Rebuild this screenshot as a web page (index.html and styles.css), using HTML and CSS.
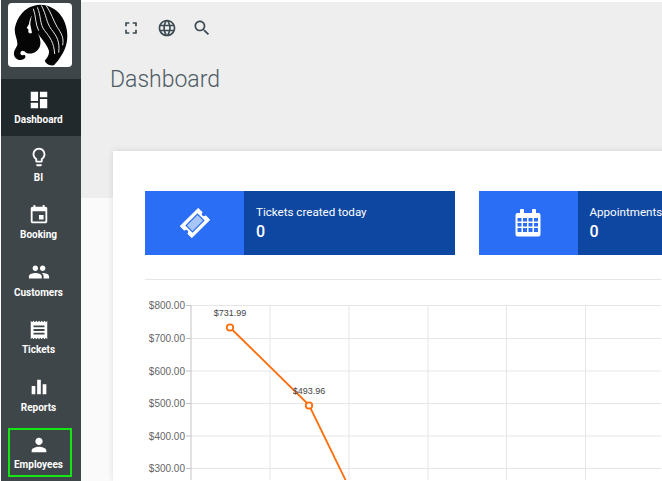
FILE: index.html
```
<!DOCTYPE html>
<html lang="en">
<head>
<meta charset="utf-8">
<title>Dashboard</title>
<link rel="stylesheet" href="styles.css">
</head>
<body>
<div class="app">
  <aside class="sidebar">
    <div class="logo-wrap">
      <div class="logo">
        <svg viewBox="12 9 192 192" width="64" height="64">
          <path class="hair" d="M88 18C62 24 40 50 33 82C29 102 42 120 40 134C38 144 28 150 30 164C32 176 46 184 58 178C66 174 66 166 60 164C54 168 47 164 50 156C54 150 60 152 66 158C82 166 102 156 108 138C112 124 106 110 102 100C112 118 128 132 134 150C138 162 130 172 122 182C128 194 140 198 150 196C166 178 182 156 188 128C194 96 186 62 164 38C146 20 116 8 88 18Z"/>
          <path class="skin" d="M84 46C78 56 76 64 75 72L68 84L73 88L73 97C76 101 80 101 84 98C83 90 80 82 79 74C79 64 81 56 84 46Z"/>
          <path class="strand" d="M100 22C112 48 106 72 122 92C138 112 150 128 152 162M112 16C128 46 126 66 142 88C158 108 168 124 164 158M126 16C142 38 148 62 160 82C172 100 180 112 176 136M88 26C96 48 94 74 104 92"/>
        </svg>
      </div>
    </div>
    <nav class="nav">
      <a class="nav-item active">
        <svg class="nav-icon" viewBox="0 0 24 24"><path d="M3 13h8V3H3v10zm0 8h8v-6H3v6zm10 0h8V11h-8v10zm0-18v6h8V3h-8z"/></svg>
        <span>Dashboard</span>
      </a>
      <a class="nav-item">
        <svg class="nav-icon" viewBox="0 0 24 24"><path d="M9 21c0 .55.45 1 1 1h4c.55 0 1-.45 1-1v-1H9v1zm3-19C8.14 2 5 5.14 5 9c0 2.38 1.19 4.47 3 5.74V17c0 .55.45 1 1 1h6c.55 0 1-.45 1-1v-2.26c1.81-1.27 3-3.36 3-5.74 0-3.86-3.14-7-7-7zm2.85 11.1l-.85.6V16h-4v-2.3l-.85-.6C7.8 12.16 7 10.63 7 9c0-2.76 2.24-5 5-5s5 2.24 5 5c0 1.63-.8 3.16-2.15 4.1z"/></svg>
        <span>BI</span>
      </a>
      <a class="nav-item">
        <svg class="nav-icon" viewBox="0 0 24 24"><path d="M17 12h-5v5h5v-5zM16 1v2H8V1H6v2H5c-1.11 0-1.99.9-1.99 2L3 19c0 1.1.89 2 2 2h14c1.1 0 2-.9 2-2V5c0-1.1-.9-2-2-2h-1V1h-2zm3 18H5V8h14v11z"/></svg>
        <span>Booking</span>
      </a>
      <a class="nav-item">
        <svg class="nav-icon" viewBox="0 0 24 24"><path d="M16 11c1.66 0 2.99-1.34 2.99-3S17.66 5 16 5c-1.66 0-3 1.34-3 3s1.34 3 3 3zm-8 0c1.66 0 2.99-1.34 2.99-3S9.66 5 8 5C6.34 5 5 6.34 5 8s1.34 3 3 3zm0 2c-2.33 0-7 1.17-7 3.5V19h14v-2.5c0-2.33-4.67-3.5-7-3.5zm8 0c-.29 0-.62.02-.97.05 1.16.84 1.97 1.97 1.97 3.45V19h6v-2.5c0-2.33-4.67-3.5-7-3.5z"/></svg>
        <span>Customers</span>
      </a>
      <a class="nav-item">
        <svg class="nav-icon" viewBox="0 0 24 24"><path d="M18 17H6v-2h12v2zm0-4H6v-2h12v2zm0-4H6V7h12v2zM3 22l1.5-1.5L6 22l1.5-1.5L9 22l1.5-1.5L12 22l1.5-1.5L15 22l1.5-1.5L18 22l1.5-1.5L21 22V2l-1.5 1.5L18 2l-1.5 1.5L15 2l-1.5 1.5L12 2l-1.5 1.5L9 2 7.5 3.5 6 2 4.5 3.5 3 2v20z"/></svg>
        <span>Tickets</span>
      </a>
      <a class="nav-item">
        <svg class="nav-icon" viewBox="0 0 24 24"><path d="M4 11h4v9H4zM10 4h4v16h-4zM16 9h4v11h-4z"/></svg>
        <span>Reports</span>
      </a>
      <a class="nav-item highlighted">
        <svg class="nav-icon" viewBox="0 0 24 24"><path d="M12 12c2.21 0 4-1.79 4-4s-1.79-4-4-4-4 1.79-4 4 1.79 4 4 4zm0 2c-2.67 0-8 1.34-8 4v2h16v-2c0-2.66-5.33-4-8-4z"/></svg>
        <span>Employees</span>
      </a>
    </nav>
  </aside>
  <main class="main">
    <header class="band">
      <div class="toolbar">
        <svg class="tool-icon" viewBox="0 0 24 24"><path d="M7 14H5v5h5v-2H7v-3zm-2-4h2V7h3V5H5v5zm12 7h-3v2h5v-5h-2v3zM14 5v2h3v3h2V5h-5z"/></svg>
        <svg class="tool-icon" viewBox="0 0 24 24"><path d="M11.99 2C6.47 2 2 6.48 2 12s4.47 10 9.99 10C17.52 22 22 17.52 22 12S17.52 2 11.99 2zm6.93 6h-2.95c-.32-1.25-.78-2.45-1.38-3.56 1.84.63 3.37 1.91 4.33 3.56zM12 4.04c.83 1.2 1.48 2.53 1.91 3.96h-3.82c.43-1.43 1.08-2.76 1.91-3.96zM4.26 14C4.1 13.36 4 12.69 4 12s.1-1.36.26-2h3.38c-.08.66-.14 1.32-.14 2 0 .68.06 1.34.14 2H4.26zm.82 2h2.95c.32 1.25.78 2.45 1.38 3.56-1.84-.63-3.37-1.9-4.33-3.56zm2.95-8H5.08c.96-1.66 2.49-2.93 4.33-3.56C8.81 5.55 8.35 6.75 8.03 8zM12 19.96c-.83-1.2-1.48-2.53-1.91-3.96h3.82c-.43 1.43-1.08 2.76-1.91 3.96zM14.34 14H9.66c-.09-.66-.16-1.32-.16-2 0-.68.07-1.35.16-2h4.68c.09.65.16 1.32.16 2 0 .68-.07 1.34-.16 2zm.25 5.56c.6-1.11 1.06-2.31 1.38-3.56h2.95c-.96 1.65-2.49 2.93-4.33 3.56zM16.36 14c.08-.66.14-1.32.14-2 0-.68-.06-1.34-.14-2h3.38c.16.64.26 1.31.26 2s-.1 1.36-.26 2h-3.38z"/></svg>
        <svg class="tool-icon tool-search" viewBox="0 0 24 24"><path d="M15.5 14h-.79l-.28-.27C15.41 12.59 16 11.11 16 9.5 16 5.91 13.09 3 9.5 3S3 5.91 3 9.5 5.91 16 9.5 16c1.61 0 3.09-.59 4.23-1.57l.27.28v.79l5 4.99L20.49 19l-4.99-5zm-6 0C7.01 14 5 11.99 5 9.5S7.01 5 9.5 5 14 7.01 14 9.5 11.99 14 9.5 14z"/></svg>
      </div>
      <h1 class="title">Dashboard</h1>
    </header>
    <section class="card">
      <div class="stats">
        <div class="stat">
          <div class="stat-icon">
            <svg width="30" height="30" viewBox="-15 -15 30 30"><g transform="rotate(-45)"><path class="ticket" d="M-12.500 -8H12.500V-2.500a2.500 2.500 0 0 0 0 5V8H-12.500V2.500a2.500 2.500 0 0 0 0 -5Z"/><rect class="ticket-inner" x="-8" y="-4.500" width="16" height="9"/></g></svg>
          </div>
          <div class="stat-body">
            <div class="stat-label">Tickets created today</div>
            <div class="stat-value">0</div>
          </div>
        </div>
        <div class="stat">
          <div class="stat-icon">
            <svg width="26" height="28" viewBox="0 0 26 28"><path class="calendar" fill-rule="evenodd" d="M5 1.500a2 2 0 0 1 4 0V4h8V1.500a2 2 0 0 1 4 0V4h2.500A2 2 0 0 1 25.500 6v19.500a2 2 0 0 1-2 2H2.500a2 2 0 0 1-2-2V6a2 2 0 0 1 2-2H5zM2.500 9v3.500h4V9zm5.500 0v3.500h4V9zm5.500 0v3.500h4V9zm5.500 0v3.500h4V9zM2.500 14v3.500h4V14zm5.500 0v3.500h4V14zm5.500 0v3.500h4V14zm5.500 0v3.500h4V14zM2.500 19v3.500a.5.5 0 0 0 .5.5h3.500v-4zm5.500 0v4h4v-4zm5.500 0v4h4v-4zm5.500 0v4h3.500a.5.5 0 0 0 .5-.5V19z"/></svg>
          </div>
          <div class="stat-body">
            <div class="stat-label">Appointments today</div>
            <div class="stat-value">0</div>
          </div>
        </div>
      </div>
      <hr class="divider">
      <svg class="chart" width="516" height="200" viewBox="0 0 516 200">
        <g class="grid">
          <path d="M46 25.500H516M46 58.500H516M46 91H516M46 123.500H516M46 156H516M46 188.500H516"/>
          <path d="M125 25V200M204 25V200M283 25V200M361.500 25V200M440.500 25V200"/>
        </g>
        <path class="axis" d="M46 25V200M41 25.500H46M41 58.500H46M41 91H46M41 123.500H46M41 156H46M41 188.500H46"/>
        <g class="y-labels">
          <text x="40" y="29">$800.00</text>
          <text x="40" y="62">$700.00</text>
          <text x="40" y="94.500">$600.00</text>
          <text x="40" y="127">$500.00</text>
          <text x="40" y="159.500">$400.00</text>
          <text x="40" y="192">$300.00</text>
        </g>
        <polyline class="line" points="85,47.500 164,125 201,201"/>
        <circle class="point" cx="85" cy="47.500" r="3.200"/>
        <circle class="point" cx="164" cy="125.500" r="3.200"/>
        <text class="point-label" x="85" y="36">$731.99</text>
        <text class="point-label" x="164" y="114">$493.96</text>
      </svg>
    </section>
  </main>
</div>
</body>
</html>
```
FILE: styles.css
```
*, *::after { box-sizing: border-box; }
html, body { margin: 0; height: 100%; overflow: hidden; background: #fff; }
body { font-family: Roboto, "Liberation Sans", sans-serif; }

.app { display: flex; height: 481px; padding-left: 1px; }

.sidebar { flex: 0 0 80px; background: #3e4649; display: flex; flex-direction: column; }
.logo-wrap { height: 80px; padding: 3px 0 0 7px; }
.logo { width: 64px; height: 64px; background: #fff; border-radius: 4px; overflow: hidden; }
.logo svg { display: block; }
.hair { fill: #050505; }
.skin { fill: #fff; }
.strand { fill: none; stroke: #e4e4e4; stroke-width: 3; }

.nav { display: flex; flex-direction: column; }
.nav-item { position: relative; height: 57.500px; display: flex; flex-direction: column; align-items: center; color: #fff; font-size: 10px; font-weight: 700; line-height: 12px; padding: 10px 5px 0 0; }
.nav-item.active { background: #22292c; }
.nav-item span { margin-top: 3.500px; }
.nav-icon { width: 22px; height: 22px; fill: #fff; display: block; }
.highlighted::after { content: ""; position: absolute; left: 7px; top: 4px; width: 64px; height: 49px; border: 2.500px solid #14e614; }

.main { flex: 1 1 0; min-width: 0; background: #fafafa; }
.band { height: 198px; background: #eee; border-top: 2px solid #fff; padding: 0 0 0 29px; }
.toolbar { display: flex; align-items: center; gap: 16px; height: 52px; padding: 0 0 0 11px; }
.tool-icon { width: 20px; height: 20px; fill: #3c4a52; display: block; }
.tool-search { margin-left: -1px; }
.title { margin: 10px 0 0; font-size: 23px; font-weight: 300; line-height: 32px; color: #4d5a63; }

.card { width: 600px; height: 330px; margin: -47px 0 0 32px; background: #fff; box-shadow: 0 0 6px rgba(0,0,0,.12); padding: 40px 0 0 32px; }
.stats { display: flex; gap: 23.500px; }
.stat { flex: 0 0 310px; height: 64px; display: flex; background: #0d47a1; color: #fff; }
.stat-icon { flex: 0 0 99px; background: #2a6ef5; display: flex; align-items: center; justify-content: center; }
.ticket, .calendar { fill: #fff; }
.ticket { stroke: #fff; stroke-width: 1; stroke-linejoin: round; }
.ticket-inner { fill: #a9c6fb; stroke: #2a6ef5; stroke-width: 1.200; }
.stat-body { padding: 13px 12px 0; white-space: nowrap; }
.stat-label { font-size: 11.600px; font-weight: 400; line-height: 16px; }
.stat-value { font-size: 16px; font-weight: 500; line-height: 24px; }
.divider { width: 516px; margin: 24px 0 0; border: 0; border-top: 1px solid #e6e6e6; }

.chart { display: block; overflow: hidden; }
.grid path { fill: none; stroke: #e6e6e6; stroke-width: 1; }
.axis { fill: none; stroke: #c4c4c4; stroke-width: 1; }
.y-labels text { font-family: "Liberation Sans", sans-serif; font-size: 10px; fill: #666; text-anchor: end; }
.point-label { font-family: "Liberation Sans", sans-serif; font-size: 9px; fill: #444; text-anchor: middle; }
.line { fill: none; stroke: #ff6d0a; stroke-width: 1.800; }
.point { fill: #fff; stroke: #ff6d0a; stroke-width: 1.800; }
```
